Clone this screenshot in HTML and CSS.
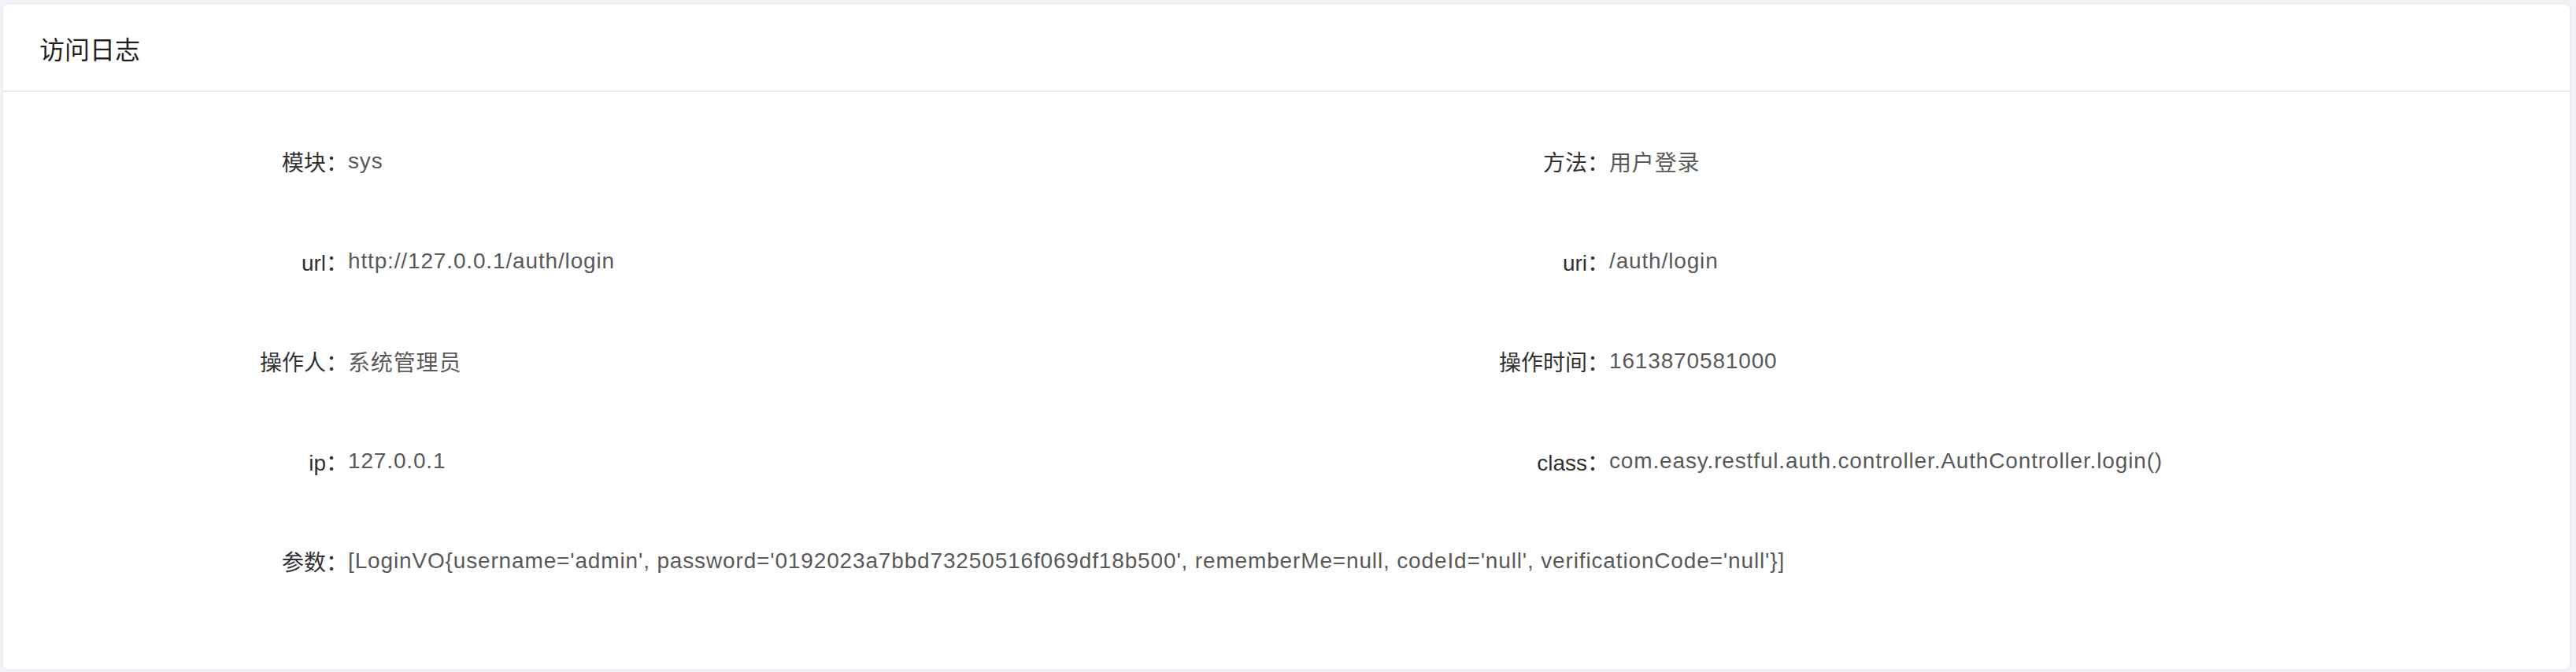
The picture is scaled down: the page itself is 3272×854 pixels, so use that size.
FILE: index.html
```html
<!DOCTYPE html>
<html lang="zh-CN">
<head>
<meta charset="utf-8">
<title>访问日志</title>
<link rel="stylesheet" href="styles.css">
</head>
<body>
<div class="page">
  <div class="card">
    <div class="card-header">访问日志</div>
    <div class="card-body">
      <div class="form">
        <div class="item"><span class="label">模块：</span><span class="value">sys</span></div>
        <div class="item"><span class="label">方法：</span><span class="value">用户登录</span></div>
        <div class="item"><span class="label">url：</span><span class="value">http://127.0.0.1/auth/login</span></div>
        <div class="item"><span class="label">uri：</span><span class="value">/auth/login</span></div>
        <div class="item"><span class="label">操作人：</span><span class="value">系统管理员</span></div>
        <div class="item"><span class="label">操作时间：</span><span class="value">1613870581000</span></div>
        <div class="item"><span class="label">ip：</span><span class="value">127.0.0.1</span></div>
        <div class="item"><span class="label">class：</span><span class="value">com.easy.restful.auth.controller.AuthController.login()</span></div>
        <div class="item full"><span class="label">参数：</span><span class="value">[LoginVO{username='admin', password='0192023a7bbd73250516f069df18b500', rememberMe=null, codeId='null', verificationCode='null'}]</span></div>
      </div>
    </div>
  </div>
</div>
</body>
</html>
```
FILE: styles.css
```css
html, body {
  margin: 0;
  padding: 0;
  background: #f0f2f5;
}
body {
  font-family: "Liberation Sans", "Noto Sans CJK SC", sans-serif;
  color: #303133;
}
.page {
  box-sizing: border-box;
  height: 100vh;
  padding: 4px 6px 2px 2px;
  display: flex;
  flex-direction: column;
}
.card {
  flex: 1;
  background: #fff;
  border: 2px solid #ebeef5;
  border-radius: 8px;
  overflow: hidden;
}
.card-header {
  height: 109px;
  padding: 0 46px;
  display: flex;
  align-items: center;
  font-size: 32px;
  color: #1f1f1f;
  border-bottom: 2px solid #e8e8e8;
}
.card-body {
  padding: 48px 16px 48px 40px;
}
.form {
  display: grid;
  grid-template-columns: 1fr 1fr;
  row-gap: 47px;
}
.item {
  display: flex;
  align-items: center;
  height: 80px;
  font-size: 28px;
}
.item.full {
  grid-column: 1 / -1;
}
.label {
  width: 398px;
  flex-shrink: 0;
  text-align: right;
  color: #303133;
}
.value {
  color: #595959;
  white-space: nowrap;
  letter-spacing: 0.85px;
}
```
